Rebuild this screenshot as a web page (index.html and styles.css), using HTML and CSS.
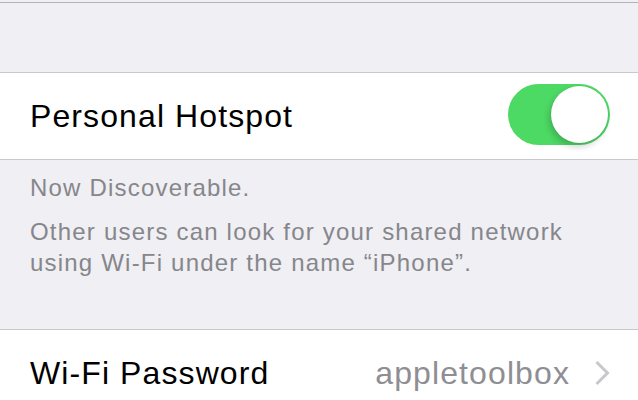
FILE: index.html
```html
<!DOCTYPE html>
<html>
<head>
<meta charset="utf-8">
<link rel="stylesheet" href="styles.css">
</head>
<body>
<div class="top-gap"></div>
<div class="header-space"></div>
<div class="group">
  <div class="cell">
    <span class="label">Personal Hotspot</span>
    <div class="toggle"><div class="knob"></div></div>
  </div>
</div>
<div class="footer">
  <p class="note">Now Discoverable.</p>
  <p class="note">Other users can look for your shared network<br>using Wi-Fi under the name “iPhone”.</p>
</div>
<div class="group">
  <div class="cell">
    <span class="label">Wi-Fi Password</span>
    <span class="value">appletoolbox</span>
    <svg class="chevron" width="16" height="26" viewBox="0 0 16 26"><path d="M2.5 2 L13.5 13 L2.5 24" fill="none" stroke="#c7c7cc" stroke-width="3"/></svg>
  </div>
</div>
</body>
</html>
```
FILE: styles.css
```css
html, body {
  margin: 0;
  padding: 0;
  background: #efeff4;
  font-family: "Liberation Sans", Arial, sans-serif;
  overflow: hidden;
}
.top-gap {
  height: 2px;
}
.header-space {
  height: 69px;
  border-top: 1px solid #b4b4b8;
}
.group {
  background: #ffffff;
  border-top: 1px solid #c8c7cc;
  border-bottom: 1px solid #c8c7cc;
}
.cell {
  display: flex;
  align-items: center;
  height: 86px;
  box-sizing: border-box;
  padding: 0 28px 0 30px;
}
.label {
  font-size: 32px;
  line-height: 36px;
  letter-spacing: 1.1px;
  color: #000000;
}
.value {
  margin-left: auto;
  font-size: 32px;
  line-height: 36px;
  letter-spacing: 1.1px;
  color: #8e8e93;
}
.chevron {
  margin-left: 24px;
  flex: none;
}
.toggle {
  margin-left: auto;
  margin-bottom: 3px;
  width: 102px;
  height: 61px;
  border-radius: 31px;
  background: #4cd964;
  display: flex;
  align-items: center;
  justify-content: flex-end;
  padding: 0 2px;
  box-sizing: border-box;
}
.knob {
  width: 57px;
  height: 57px;
  border-radius: 50%;
  background: #ffffff;
  box-shadow: -2px 4px 6px rgba(0, 0, 0, 0.18), 0 0 0 0.5px rgba(0, 0, 0, 0.08);
}
.footer {
  height: 169px;
  box-sizing: border-box;
  padding: 12px 30px 0 30px;
}
.note {
  margin: 0 0 13px 0;
  font-size: 24px;
  line-height: 31px;
  letter-spacing: 1.2px;
  color: #86868b;
}
```
